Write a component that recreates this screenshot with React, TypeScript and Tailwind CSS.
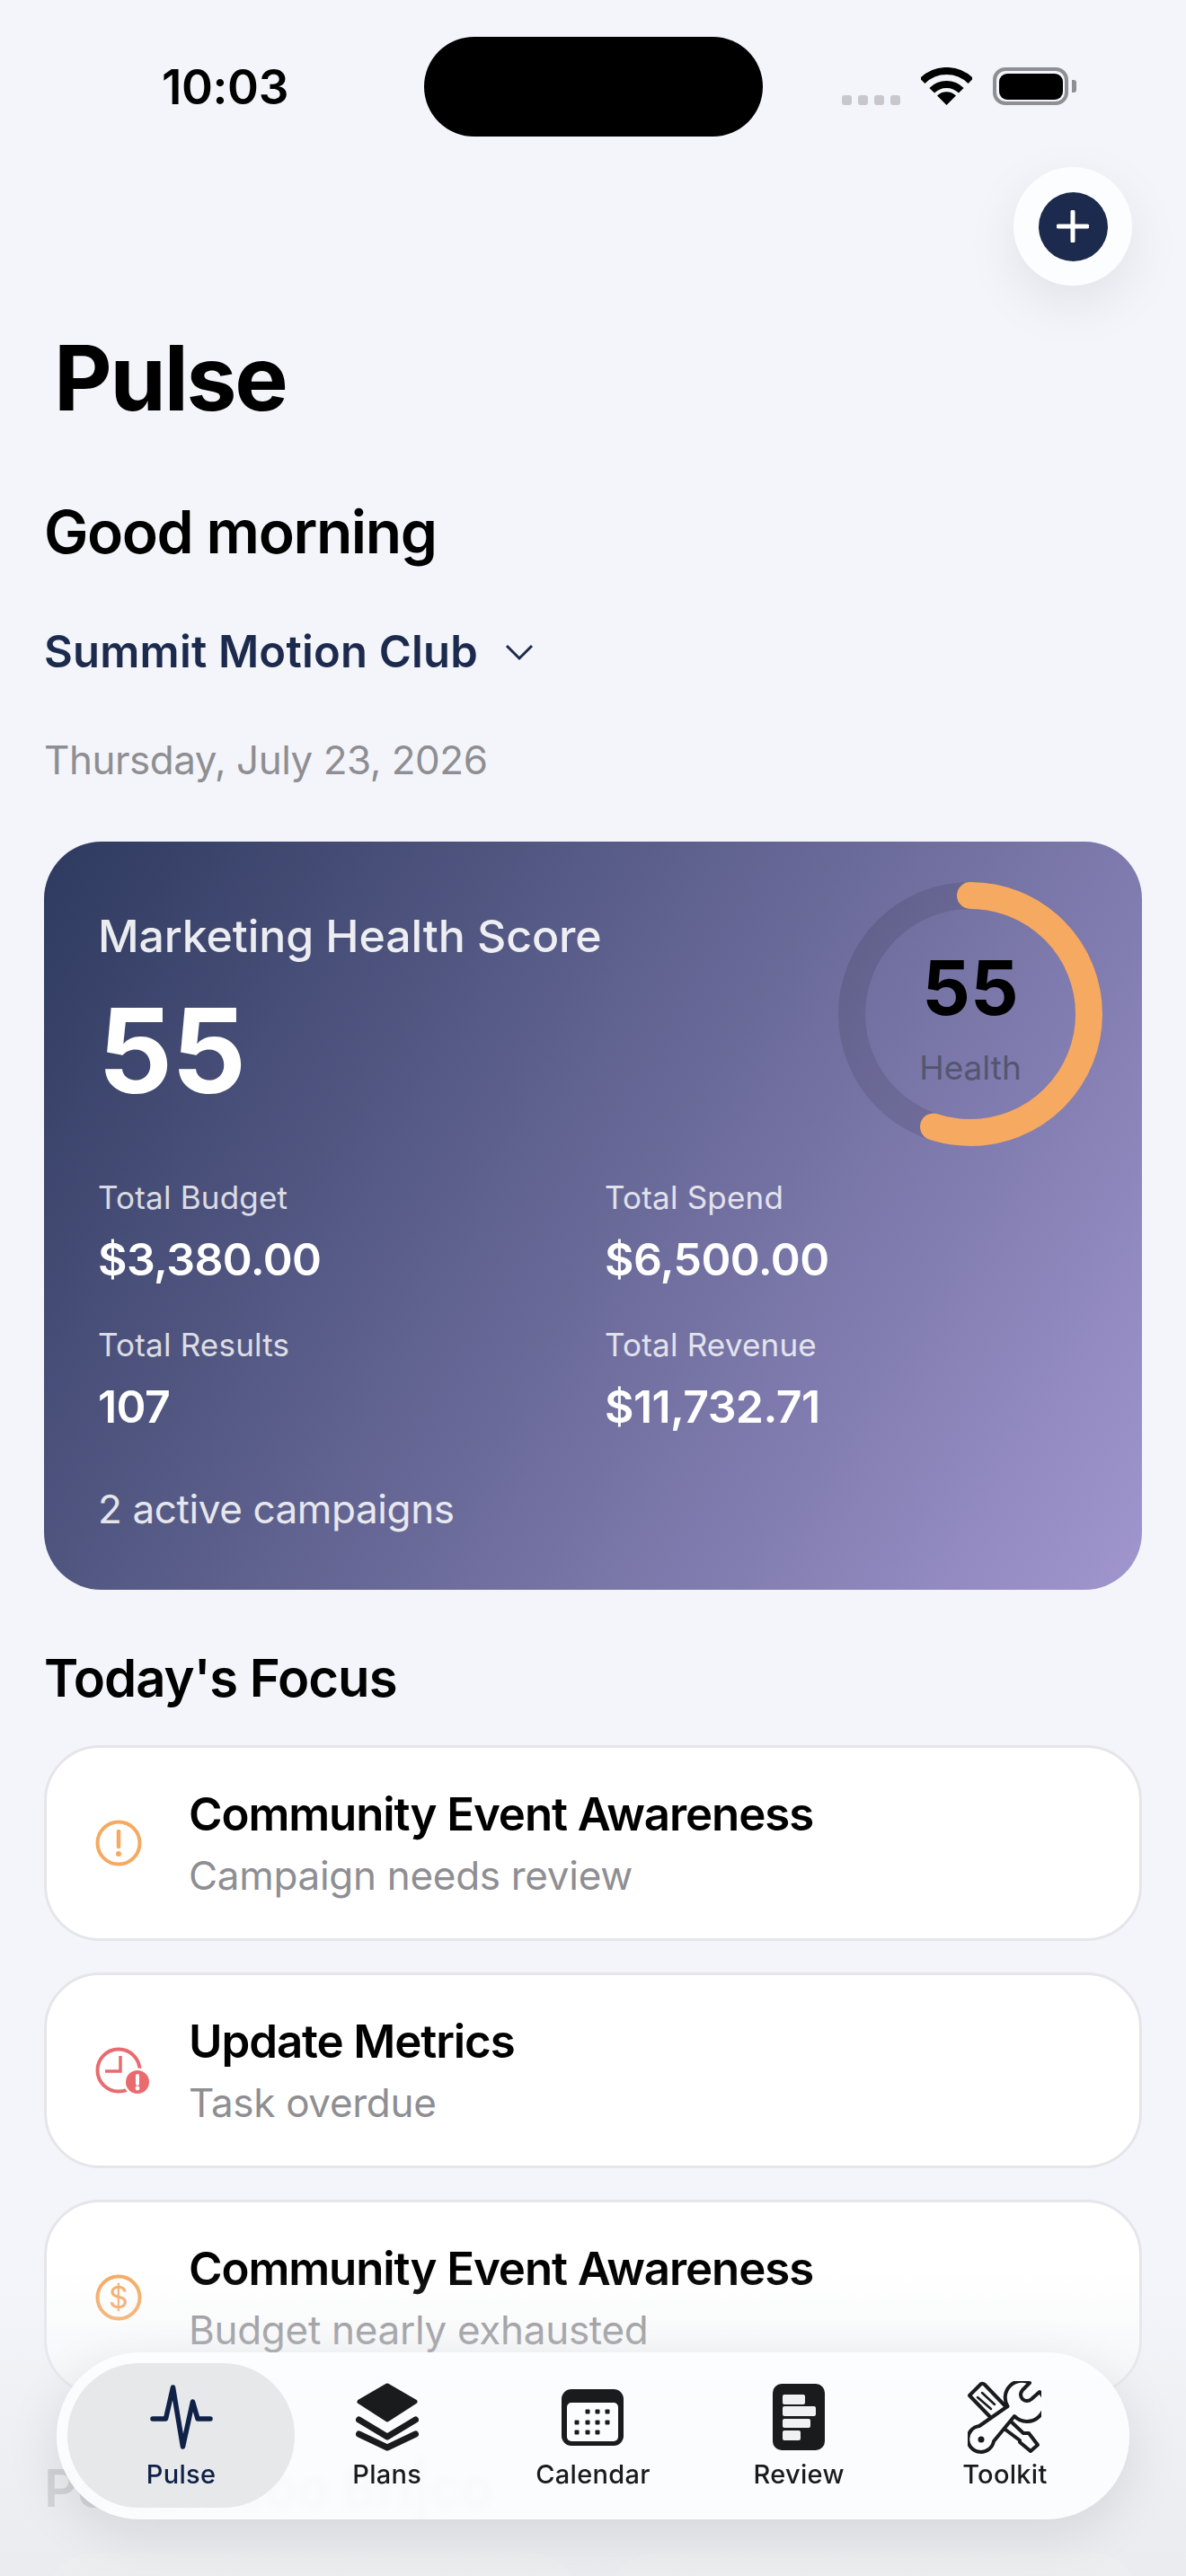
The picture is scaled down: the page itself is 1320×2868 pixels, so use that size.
import type { ReactNode } from 'react';

const StatusBar = () => {
  return (
    <div className="flex h-[152px] items-start pl-[180px] pt-[41px]">
      <span className="mt-[30px] w-[292px] text-[53px] leading-none font-semibold tracking-[-0.4px] text-black">10:03</span>
      {/* dynamic island */}
      <div className="h-[111px] w-[377px] rounded-[56px] bg-black" />
      <div className="ml-[88px] mt-[34px] flex items-end">
        <div className="flex gap-[7px]">
          <span className="h-[11px] w-[11px] rounded-[3px] bg-[#c7c7cc]" />
          <span className="h-[11px] w-[11px] rounded-[3px] bg-[#c7c7cc]" />
          <span className="h-[11px] w-[11px] rounded-[3px] bg-[#c7c7cc]" />
          <span className="h-[11px] w-[11px] rounded-[3px] bg-[#c7c7cc]" />
        </div>
        <svg className="ml-[23px]" width="57" height="42" viewBox="0 0 57 42" fill="none">
          <path d="M1.6 15.1A38 38 0 0 1 55.4 15.1" stroke="#000" strokeWidth="8" />
          <path d="M12.2 25.7A23 23 0 0 1 44.8 25.7" stroke="#000" strokeWidth="8" />
          <path d="M28.5 42L18 31.5A15 15 0 0 1 39 31.5Z" fill="#000" />
        </svg>
        <div className="ml-[23px] flex h-[42px] w-[84px] items-center justify-center rounded-[14px] border-[4px] border-[#8e8e93]">
          <div className="h-[29px] w-[71px] rounded-[9px] bg-black" />
        </div>
        <div className="mb-[14px] ml-[4px] h-[14px] w-[5px] rounded-r-[3px] bg-[#8e8e93]" />
      </div>
    </div>
  );
};

const Stat = ({ label, value, first }: { label: string; value: string; first?: boolean }) => {
  return (
    <div className={first ? 'mt-[81px]' : 'mt-[53px]'}>
      <div className="text-[35px] leading-none tracking-[0.2px] text-white/80">{label}</div>
      <div className="mt-[26px] text-[50px] leading-none font-semibold tracking-[-0.6px] text-white">{value}</div>
    </div>
  );
};

const HealthRing = () => {
  return (
    <div className="absolute right-[44px] top-[45px] h-[294px] w-[294px]">
      <svg width="294" height="294" viewBox="0 0 294 294" fill="none" className="-rotate-90">
        <circle cx="147" cy="147" r="132" stroke="#000" strokeOpacity="0.1" strokeWidth="30" />
        <circle
          cx="147"
          cy="147"
          r="132"
          stroke="#f6a961"
          strokeWidth="30"
          strokeLinecap="round"
          strokeDasharray="456.2 829.4"
        />
      </svg>
      <div className="absolute inset-0 flex flex-col items-center">
        <span className="mt-[76px] text-[84px] leading-none font-bold text-black">55</span>
        <span className="mt-[28px] text-[37px] leading-none text-[#54566f]">Health</span>
      </div>
    </div>
  );
};

const FocusCard = ({ icon, title, subtitle }: { icon: ReactNode; title: string; subtitle: string }) => {
  return (
    <div className="flex h-[218px] items-center rounded-[62px] border-[3px] border-[#e5e5ea] bg-white pl-[54px]">
      <div className="h-[52px] w-[56px] shrink-0">{icon}</div>
      <div className="ml-[48px]">
        <div className="text-[51px] leading-none font-semibold tracking-[-1.1px] text-black">{title}</div>
        <div className="mt-[21px] text-[44px] leading-none tracking-[-0.3px] text-[#8e8e93]">{subtitle}</div>
      </div>
    </div>
  );
};

const AlertIcon = () => (
  <svg width="52" height="52" viewBox="0 0 52 52" fill="none">
    <circle cx="26" cy="26" r="23.5" stroke="#f6a961" strokeWidth="4" />
    <path d="M26 13V30" stroke="#f6a961" strokeWidth="4.5" strokeLinecap="round" />
    <circle cx="26" cy="38" r="3" fill="#f6a961" />
  </svg>
);

const OverdueIcon = () => (
  <svg width="64" height="56" viewBox="0 0 64 56" fill="none">
    <circle cx="26" cy="26" r="23.5" stroke="#e96b6f" strokeWidth="4" />
    <path d="M28 10V27H11" stroke="#e96b6f" strokeWidth="3.5" />
    <circle cx="47" cy="39" r="15.5" fill="#fff" />
    <circle cx="47" cy="39" r="13" fill="#e96b6f" />
    <path d="M47 32V41" stroke="#fff" strokeWidth="4" strokeLinecap="round" />
    <circle cx="47" cy="46" r="2.4" fill="#fff" />
  </svg>
);

const DollarIcon = () => (
  <svg width="52" height="52" viewBox="0 0 52 52" fill="none">
    <circle cx="26" cy="26" r="23.5" stroke="#f6a961" strokeWidth="4" />
    <text x="26" y="38" textAnchor="middle" fontSize="34" fill="#f6a961" fontFamily="Inter, sans-serif">
      $
    </text>
  </svg>
);

const PulseIcon = () => (
  <svg width="70" height="72" viewBox="0 0 70 72" fill="none">
    <path
      d="M3 38H17.5L25.5 3L36.5 69L47.5 19L53 38H67"
      stroke="#0f2147"
      strokeWidth="5.5"
      strokeLinecap="round"
      strokeLinejoin="round"
    />
  </svg>
);

const PlansIcon = () => (
  <svg width="70" height="76" viewBox="0 0 70 76" fill="none">
    <path d="M35 3L66 21L35 41L4 21Z" fill="#1a1b1d" stroke="#1a1b1d" strokeWidth="5" strokeLinejoin="round" />
    <path d="M3.5 41L35 60L66.5 41" stroke="#1a1b1d" strokeWidth="7" strokeLinecap="round" strokeLinejoin="round" />
    <path d="M3.5 57L35 72L66.5 57" stroke="#1a1b1d" strokeWidth="7" strokeLinecap="round" strokeLinejoin="round" />
  </svg>
);

const CalendarIcon = () => (
  <svg width="69" height="63" viewBox="0 0 69 63" fill="none">
    <rect width="69" height="63" rx="11" fill="#1a1b1d" />
    <rect x="6" y="15" width="57" height="43" rx="5" fill="#fcfdff" />
    {[
      [29, 25],
      [40, 25],
      [51, 25],
      [17, 37],
      [29, 37],
      [40, 37],
      [51, 37],
      [17, 48],
      [29, 48],
      [40, 48],
    ].map(([x, y]) => (
      <rect key={`${x}-${y}`} x={x - 2.5} y={y - 2.5} width="5" height="5" rx="1" fill="#1a1b1d" />
    ))}
  </svg>
);

const ReviewIcon = () => (
  <svg width="58" height="74" viewBox="0 0 58 74" fill="none">
    <rect width="58" height="74" rx="10" fill="#1a1b1d" />
    <rect x="11" y="12" width="25" height="11" rx="2" fill="#f0f1f3" />
    <rect x="11" y="25" width="37" height="11" rx="2" fill="#f0f1f3" />
    <rect x="11" y="39" width="31" height="10" rx="2" fill="#f0f1f3" />
    <rect x="11" y="52" width="20" height="11" rx="2" fill="#f0f1f3" />
  </svg>
);

const ToolkitIcon = () => (
  <svg width="82" height="81" viewBox="0 0 82 81" fill="none" stroke="#1a1b1d" strokeWidth="4" strokeLinejoin="round" strokeLinecap="round">
    {/* screwdriver */}
    <path d="M15 3L2 16L28 43L43 29L19 4Q17 2 15 3Z" />
    <path d="M11 18L26 31M16 13L30 26" strokeWidth="2.5" />
    <path d="M46 43L62 58H68L78 71L70 78L58 68V66L38 51" />
    {/* wrench */}
    <path
      d="M69 2A18.5 18.5 0 0 0 44.5 28L13 50A14.5 14.5 0 1 0 29 67L52 39A18.5 18.5 0 0 0 80 12L71 20Q66 24 61 20Q57 15 61 10Z"
      fill="#fcfdff"
    />
    <circle cx="15" cy="65" r="3.5" fill="#1a1b1d" stroke="none" />
  </svg>
);

const NavItem = ({ icon, label, active }: { icon: ReactNode; label: string; active?: boolean }) => {
  return (
    <div className="relative flex flex-col items-center pt-[32px]">
      {active && <div className="absolute -inset-x-[12px] top-[12px] h-[161px] rounded-[80px] bg-[#e3e5e8]/90" />}
      <div className="relative flex h-[80px] items-center">{icon}</div>
      <span className={`relative mt-[9px] text-[29px] leading-none font-medium tracking-[0.3px] ${active ? 'text-[#0f2147]' : 'text-[#1a1b1d]'}`}>
        {label}
      </span>
    </div>
  );
};

const App = () => {
  return (
    <div className="relative h-[2868px] w-[1320px] overflow-hidden bg-[#f4f5fa] [font-family:Inter,sans-serif]">
      <StatusBar />

      {/* add button */}
      <div className="mt-[34px] flex justify-end pr-[60px]">
        <div className="flex h-[132px] w-[132px] items-center justify-center rounded-full bg-[#fcfdfe] shadow-[0_20px_60px_rgba(0,0,0,0.08)]">
          <div className="flex h-[77px] w-[77px] items-center justify-center rounded-full bg-[#1c2b4d]">
            <svg width="36" height="36" viewBox="0 0 36 36" fill="none">
              <path d="M18 2V34M2 18H34" stroke="#fff" strokeWidth="5" strokeLinecap="round" />
            </svg>
          </div>
        </div>
      </div>

      <main className="px-[49px]">
        <h1 className="ml-[11px] mt-[53px] text-[100px] leading-none font-bold tracking-[-2.2px] text-black">Pulse</h1>
        <h2 className="mt-[88px] text-[66px] leading-none font-semibold tracking-[-1.4px] text-black">Good morning</h2>

        {/* club switcher */}
        <div className="mt-[76px] flex items-center">
          <span className="text-[49px] leading-none font-semibold tracking-[0.2px] text-[#1c2b4d]">Summit Motion Club</span>
          <svg className="ml-[30px]" width="32" height="20" viewBox="0 0 32 20" fill="none">
            <path d="M2 3L16 17L30 3" stroke="#1c2b4d" strokeWidth="3" />
          </svg>
        </div>
        <div className="mt-[74px] text-[44px] leading-none tracking-[-0.5px] text-[#8e8e93]">Thursday, July 23, 2026</div>

        {/* health score card */}
        <section className="relative mt-[69px] h-[833px] rounded-[64px] bg-[linear-gradient(122deg,#2e3a5f_0%,#a196cf_100%)] pl-[60px] pt-[80px]">
          <div className="text-[50px] leading-none font-medium tracking-[-0.1px] text-white/90">Marketing Health Score</div>
          <div className="mt-[38px] text-[130px] leading-none font-bold tracking-[-1px] text-white">55</div>
          <HealthRing />
          <div className="grid grid-cols-[564px_1fr]">
            <Stat first label="Total Budget" value="$3,380.00" />
            <Stat first label="Total Spend" value="$6,500.00" />
            <Stat label="Total Results" value="107" />
            <Stat label="Total Revenue" value="$11,732.71" />
          </div>
          <div className="mt-[67px] text-[44px] leading-none tracking-[-0.4px] text-white/85">2 active campaigns</div>
        </section>

        <h2 className="mt-[69px] text-[58px] leading-none font-semibold tracking-[-1px] text-black">Today's Focus</h2>
        <div className="mt-[46px] flex flex-col gap-[35px]">
          <FocusCard icon={<AlertIcon />} title="Community Event Awareness" subtitle="Campaign needs review" />
          <FocusCard icon={<OverdueIcon />} title="Update Metrics" subtitle="Task overdue" />
          <FocusCard icon={<DollarIcon />} title="Community Event Awareness" subtitle="Budget nearly exhausted" />
        </div>

        <h2 className="mt-[74px] text-[58px] leading-none font-semibold text-black/45">Po Bamboo Bri|co</h2>
        <div className="mt-[43px] grid grid-cols-2 gap-[27px]">
          <div className="h-[200px] rounded-[58px] bg-white" />
          <div className="h-[200px] rounded-[58px] bg-white" />
        </div>
      </main>

      {/* fade under the tab bar */}
      <div className="absolute inset-x-0 bottom-0 h-[340px] bg-gradient-to-b from-transparent via-[#eceef1]/70 to-[#e9eaed]/85" />

      {/* tab bar */}
      <nav className="absolute bottom-[63px] left-[63px] grid h-[186px] w-[1194px] grid-cols-5 rounded-[93px] bg-[#fcfdff]/90 px-[24px] shadow-[0_16px_60px_rgba(0,0,0,0.1)] backdrop-blur-[3px]">
        <NavItem active icon={<PulseIcon />} label="Pulse" />
        <NavItem icon={<PlansIcon />} label="Plans" />
        <NavItem icon={<CalendarIcon />} label="Calendar" />
        <NavItem icon={<ReviewIcon />} label="Review" />
        <NavItem icon={<ToolkitIcon />} label="Toolkit" />
      </nav>
    </div>
  );
};

export default App;
